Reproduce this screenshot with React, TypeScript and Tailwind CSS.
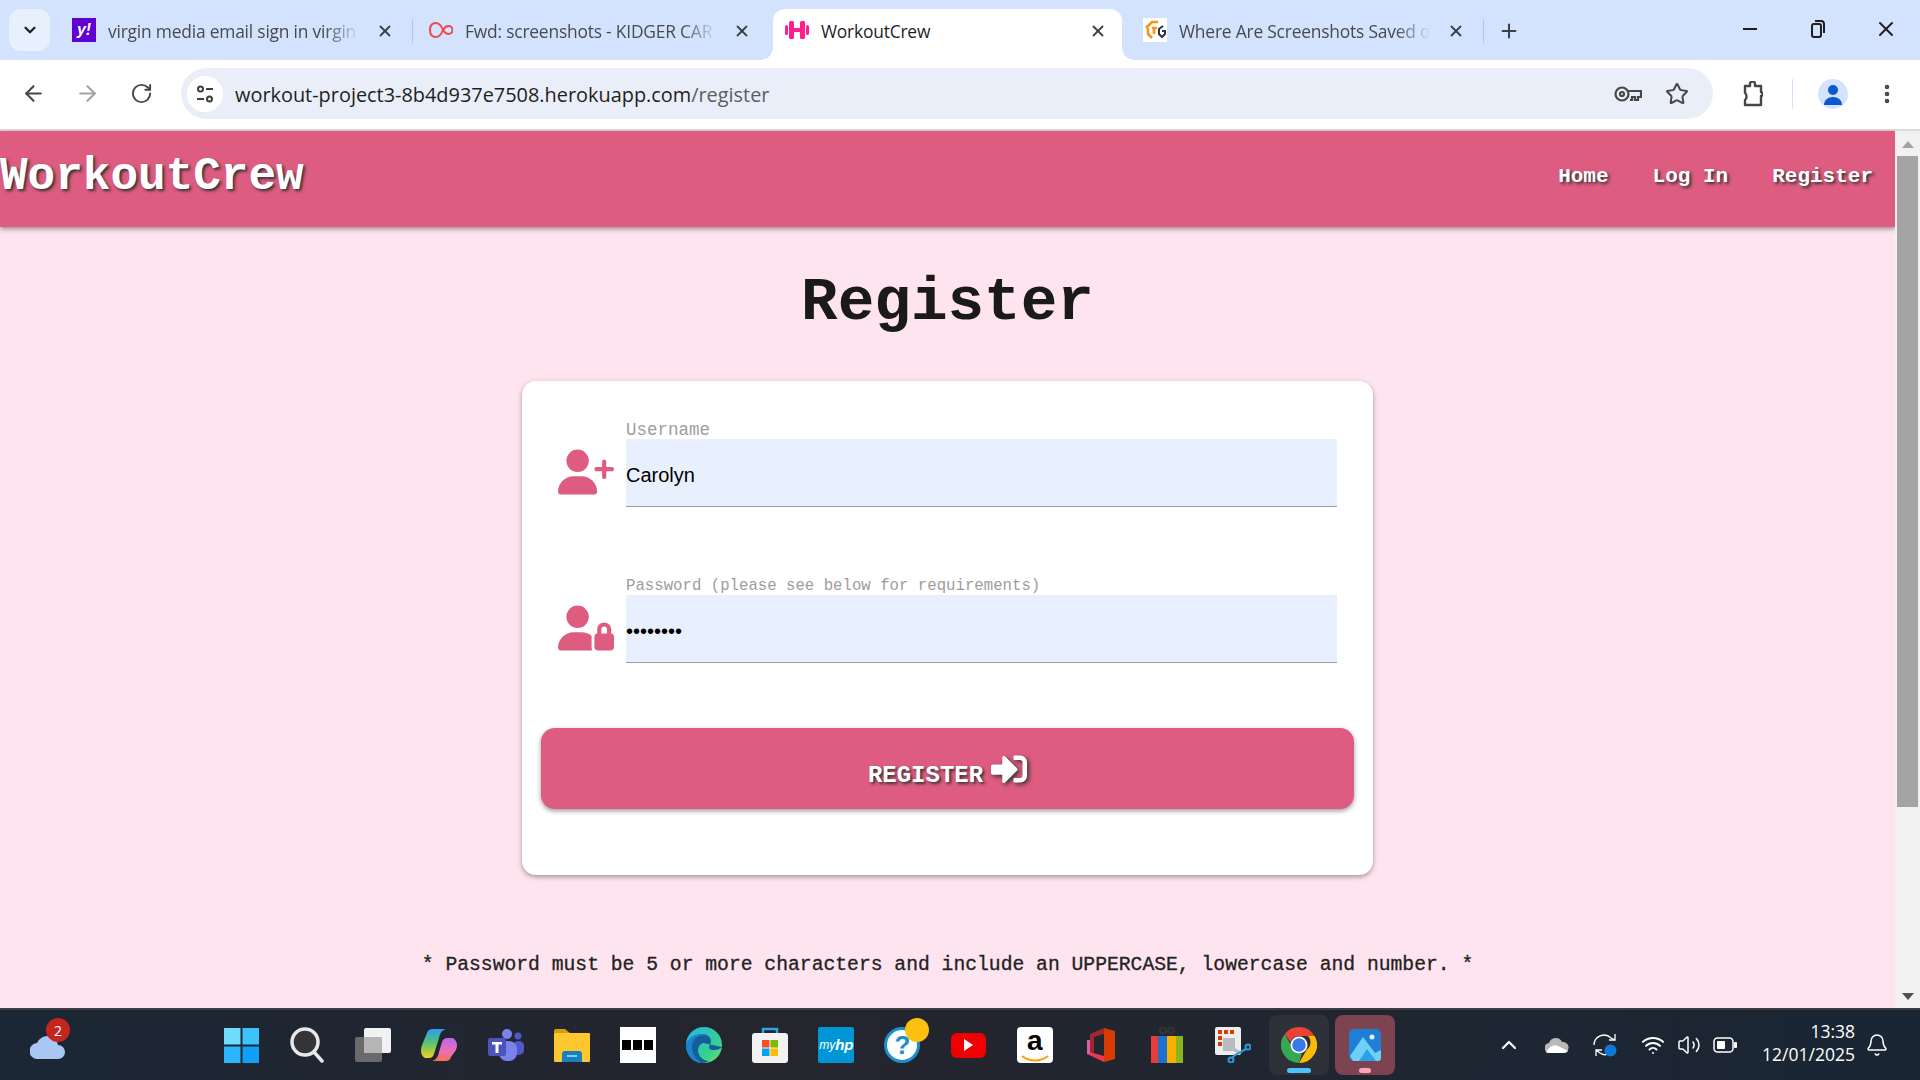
import {
  ArrowLeft,
  ArrowRight,
  Bell,
  ChevronDown,
  ChevronUp,
  EllipsisVertical,
  Plus,
  RotateCw,
  Star,
  Volume2,
  Wifi,
  X,
} from "lucide-react";
import { FaSignInAlt } from "react-icons/fa";
import { FaUserLock, FaUserPlus } from "react-icons/fa6";
import type { ReactNode } from "react";

const typewriter = "font-['Liberation_Mono',monospace] font-bold";
const chromeFont = "font-['Open_Sans',sans-serif]";

const Tab = ({
  icon,
  title,
  active,
  width,
}: {
  icon: ReactNode;
  title: string;
  active?: boolean;
  width: string;
}) => (
  <div
    className={`relative flex h-[51px] shrink-0 items-center pb-[7px] pl-3 ${width} ${
      active ? "rounded-t-[12px] bg-white" : ""
    }`}
  >
    <div className="mb-[2px] flex h-6 w-6 shrink-0 items-center justify-center overflow-hidden">{icon}</div>
    <span
      className={`ml-3 w-[252px] overflow-hidden whitespace-nowrap text-[17.400px] tracking-[-0.2px] ${chromeFont} ${
        active
          ? "text-[#1f1f1f]"
          : "text-[#474b50] [mask-image:linear-gradient(to_right,black_86%,transparent)]"
      }`}
    >
      {title}
    </span>
    <X className="ml-4 shrink-0 text-[#3c4043]" size={18} strokeWidth={2.4} />
    {active && (
      <>
        <div className="absolute -left-3 bottom-0 h-3 w-3 bg-[radial-gradient(circle_at_0_0,#d3e3fd_11.5px,white_12px)]" />
        <div className="absolute -right-3 bottom-0 h-3 w-3 bg-[radial-gradient(circle_at_100%_0,#d3e3fd_11.5px,white_12px)]" />
      </>
    )}
  </div>
);

const TabBar = () => (
  <div className="flex h-[60px] items-end bg-[#d3e3fd] pl-[9px]">
    <div className="mb-[9px] flex h-[42px] w-[41px] items-center justify-center rounded-xl bg-[#e9f0fd]">
      <ChevronDown className="text-[#1f1f1f]" size={18} strokeWidth={3} />
    </div>
    <div className="ml-[10px]">
      <Tab
        width="w-[352px]"
        title="virgin media email sign in virgin"
        icon={
          <div className="flex h-6 w-6 items-center justify-center bg-[#6001d2] font-['Liberation_Sans',sans-serif] text-[16px] font-bold italic text-white">
            y!
          </div>
        }
      />
    </div>
    <div className="mb-[17px] h-6 w-px shrink-0 bg-[#a8c7fa]" />
    <div className="ml-1">
      <Tab
        width="w-[352px]"
        title="Fwd: screenshots - KIDGER CAR"
        icon={
          <svg width="24" height="16" viewBox="0 0 24 16" fill="none" stroke="#ee4b4b" strokeWidth="2">
            <path d="M14 8C12 3 10 1 7 1 3 1 1 4 1 8s2 7 6 7c3 0 5-2 7-7Z" />
            <path d="M14 8c1.500-2.500 3-4 5.500-4a4 4 0 0 1 0 8c-2.500 0-4-1.500-5.500-4Z" />
          </svg>
        }
      />
    </div>
    <div className="ml-1">
      <Tab
        active
        width="w-[349px]"
        title="WorkoutCrew"
        icon={
          <svg width="24" height="24" viewBox="0 0 24 24" fill="#ff1f8f">
            <rect x="0" y="7" width="3" height="10" rx="1.500" />
            <rect x="4" y="3" width="5" height="18" rx="1.500" />
            <rect x="15" y="3" width="5" height="18" rx="1.500" />
            <rect x="21" y="7" width="3" height="10" rx="1.500" />
            <rect x="8" y="10" width="8" height="4" />
          </svg>
        }
      />
    </div>
    <div className="ml-[9px]">
      <Tab
        width="w-[352px]"
        title="Where Are Screenshots Saved o"
        icon={
          <svg width="24" height="24" viewBox="0 0 24 24" fill="none">
            <rect width="24" height="24" fill="#fff" />
            <path d="M3 10 9 4h6M5 10v6l4 4M9 10h5M11 10v6" stroke="#f7931e" strokeWidth="2.600" />
            <path d="M20 8l-4 3v5l3 3 3-3v-3h-3" stroke="#2b3440" strokeWidth="2" />
          </svg>
        }
      />
    </div>
    <div className="mb-[17px] h-6 w-px shrink-0 bg-[#a8c7fa]" />
    <div className="mb-[17px] ml-[13px] flex h-6 w-6 items-center justify-center">
      <Plus className="text-[#3c4043]" size={22} strokeWidth={2.2} />
    </div>
    <div className="ml-auto flex h-full items-center text-[#1f1f1f]">
      <div className="flex h-full w-[68px] items-center justify-center pb-[2px]">
        <div className="h-[2px] w-[14px] bg-[#1f1f1f]" />
      </div>
      <div className="flex h-full w-[68px] items-center justify-center pb-[2px]">
        <svg width="16" height="20" viewBox="0 0 16 20" fill="none" stroke="#1f1f1f" strokeWidth="2">
          <rect x="2" y="5" width="9" height="13" rx="2" />
          <path d="M5 2h6a3 3 0 0 1 3 3v9" />
        </svg>
      </div>
      <div className="flex h-full w-[68px] items-center justify-center pb-[2px]">
        <X size={24} strokeWidth={2} />
      </div>
    </div>
  </div>
);

const ToolBar = () => (
  <div className="flex h-[71px] items-center border-b-2 border-[#dadce0] bg-white pb-[2px]">
    <div className="ml-[6px] flex w-[54px] justify-center">
      <ArrowLeft className="text-[#474747]" size={25} strokeWidth={2} />
    </div>
    <div className="flex w-[54px] justify-center">
      <ArrowRight className="text-[#a3a3a3]" size={25} strokeWidth={2} />
    </div>
    <div className="flex w-[54px] justify-center">
      <RotateCw className="text-[#474747]" size={23} strokeWidth={2} />
    </div>
    <div className="ml-[13px] flex h-[51px] w-[1532px] items-center rounded-full bg-[#e9eef8] pr-6">
      <div className="ml-[6px] flex h-9 w-9 items-center justify-center rounded-full bg-white">
        <svg width="20" height="20" viewBox="0 0 20 20" fill="none" stroke="#3c4043" strokeWidth="2">
          <circle cx="5.500" cy="5" r="2.500" />
          <path d="M11 5h7M2 15h7" />
          <circle cx="14.500" cy="15" r="2.500" />
        </svg>
      </div>
      <span className={`ml-3 whitespace-nowrap pt-[2px] text-[19.900px] text-[#1f1f1f] ${chromeFont}`}>
        workout-project3-8b4d937e7508.herokuapp.com<span className="text-[#5a5e63]">/register</span>
      </span>
      <div className="ml-auto flex items-center gap-[23px]">
        <svg width="28" height="18" viewBox="0 0 28 18" fill="none" stroke="#474747" strokeWidth="2.200">
          <circle cx="8" cy="9" r="6.500" />
          <circle cx="8" cy="9" r="2" />
          <path d="M14 6h13v6h-3v3h-3v-3h-3v3h-2" />
        </svg>
        <Star className="text-[#474747]" size={24} strokeWidth={2} />
      </div>
    </div>
    <svg className="ml-[30px]" width="20" height="26" viewBox="0 0 20 26" fill="none" stroke="#474747" strokeWidth="2.400">
      <path d="M2 5h5V3a2 2 0 0 1 5 0v2h6v6c2 0 2 4 0 4v9H2v-5c2-1 2-6 0-7Z" strokeLinejoin="round" />
    </svg>
    <div className="ml-[29px] h-[30px] w-px bg-[#d3e3fd]" />
    <div className="ml-[25px] flex h-[30px] w-[30px] items-center justify-center overflow-hidden rounded-full bg-[#d3e3fd]">
      <svg width="22" height="24" viewBox="0 0 22 24" fill="#0b57d0">
        <circle cx="11" cy="8" r="5" />
        <path d="M2 23c0-5 4-8 9-8s9 3 9 8Z" />
      </svg>
    </div>
    <EllipsisVertical className="ml-[27px] text-[#474747]" size={24} strokeWidth={2.600} />
  </div>
);

const Field = ({
  label,
  labelSize,
  icon,
  type,
  value,
}: {
  label: string;
  labelSize: string;
  icon: ReactNode;
  type: string;
  value: string;
}) => (
  <div className="flex items-end">
    <div className="mb-[7px] flex w-[68px] shrink-0 text-[56px] text-[#dd5c80]">{icon}</div>
    <div className="flex-1">
      <label className={`block leading-[17px] text-[#a09c9c] font-['Liberation_Mono',monospace] ${labelSize}`}>
        {label}
      </label>
      <input
        readOnly
        type={type}
        value={value}
        className="block h-[68px] w-full border-b-[1.500px] border-[#9e9e9e] bg-[#e8f0fe] pt-[5px] font-['Liberation_Sans',sans-serif] text-[20px] text-black outline-none"
      />
    </div>
  </div>
);

const Page = () => (
  <div className="min-w-0 flex-1 bg-[#fee4ee]">
    <nav className="flex h-[96px] items-center justify-between bg-[#dd5c80] pr-[22px] shadow-[0_2px_5px_rgba(0,0,0,0.4)]">
      <a className={`pb-[4px] text-[46px] leading-none text-white [text-shadow:2px_2px_3px_#333] ${typewriter}`}>
        WorkoutCrew
      </a>
      <div className={`flex gap-11 pb-1 text-[21px] text-white [text-shadow:2px_2px_3px_#333] ${typewriter}`}>
        <span>Home</span>
        <span>Log In</span>
        <span>Register</span>
      </div>
    </nav>
    <h1 className={`mt-[42px] text-center text-[61px] leading-[68px] text-[#1a1a1a] ${typewriter}`}>Register</h1>
    <form className="mx-auto mt-[44px] h-[494px] w-[851px] rounded-[14px] bg-white px-[36px] pt-[41px] shadow-[0_2px_5px_rgba(0,0,0,0.35)]">
      <Field label="Username" labelSize="text-[17.500px]" type="text" value="Carolyn" icon={<FaUserPlus />} />
      <div className="mt-[71px]">
        <Field
          label="Password (please see below for requirements)"
          labelSize="text-[15.700px]"
          type="password"
          value="Password"
          icon={<FaUserLock />}
        />
      </div>
      <button
        type="button"
        className={`-mx-[17px] mt-[65px] flex h-[81px] w-[813px] items-center justify-center gap-2 rounded-[14px] bg-[#dd5c80] text-[24px] text-white shadow-[0_2px_5px_rgba(0,0,0,0.4)] [text-shadow:2px_2px_3px_#333] ${typewriter}`}
      >
        <span className="mt-[14px]">REGISTER</span>
        <FaSignInAlt className="text-[36px] [filter:drop-shadow(2px_2px_2px_#333)]" />
      </button>
    </form>
    <p className="mt-[76px] text-center text-[19.700px] text-[#222] [-webkit-text-stroke:0.3px_#222] font-['Liberation_Mono',monospace]">
      * Password must be 5 or more characters and include an UPPERCASE, lowercase and number. *
    </p>
  </div>
);

const ScrollBar = () => (
  <div className="flex w-[25px] shrink-0 flex-col items-center bg-[#f1f1f1]">
    <div className="mt-[10px] h-0 w-0 border-x-[6px] border-b-[7px] border-x-transparent border-b-[#a3a3a3]" />
    <div className="mt-[8px] h-[651px] w-[21px] bg-[#a3a3a3]" />
    <div className="mt-auto mb-[8px] h-0 w-0 border-x-[6px] border-t-[7px] border-x-transparent border-t-[#505050]" />
  </div>
);

const Cell = ({ children }: { children: ReactNode }) => (
  <div className="flex h-full w-[66.150px] shrink-0 items-center justify-center">{children}</div>
);

const Taskbar = () => (
  <div className="flex h-[72px] items-center border-t-2 border-[#3b3d42] bg-[linear-gradient(90deg,#1b2735,#25252d_40%,#1f2632_70%,#1a2634)]">
    {/* weather */}
    <div className="relative flex h-full w-[208px] shrink-0 items-center pl-[30px] pt-1">
      <svg width="36" height="24" viewBox="0 0 36 24">
        <path d="M8 24a8 8 0 0 1-1-16 11 11 0 0 1 21 2 7 7 0 0 1 0 14Z" fill="#a9c6f5" />
      </svg>
      <div className="absolute left-[46px] top-[8px] flex h-6 w-6 items-center justify-center rounded-full bg-[#c4261d] font-['Open_Sans',sans-serif] text-[14px] text-white">
        2
      </div>
    </div>

    <Cell>
      <svg width="35" height="35" viewBox="0 0 35 35">
        <rect width="16.500" height="16.500" x="0" y="0" fill="#6fdcfb" />
        <rect width="16.500" height="16.500" x="18.500" y="0" fill="#3cc3fb" />
        <rect width="16.500" height="16.500" x="0" y="18.500" fill="#2cb5fa" />
        <rect width="16.500" height="16.500" x="18.500" y="18.500" fill="#10a0f7" />
      </svg>
    </Cell>
    <Cell>
      <svg width="34" height="36" viewBox="0 0 34 36" fill="none" stroke="#e8e8e8" strokeWidth="3.500" strokeLinecap="round">
        <circle cx="15" cy="15" r="13" fill="#33343a" />
        <path d="M24 25l8 9" />
      </svg>
    </Cell>
    <Cell>
      <svg width="36" height="34" viewBox="0 0 36 34">
        <rect x="0" y="9" width="27" height="25" rx="2" fill="#6a6a6a" />
        <rect x="9" y="0" width="27" height="25" rx="2" fill="#f2f2f2" />
        <rect x="9" y="9" width="18" height="16" fill="#b5b5b5" />
      </svg>
    </Cell>
    <Cell>
      <svg width="36" height="34" viewBox="0 0 36 34">
        <defs>
          <linearGradient id="cpa" x1="0" y1="0" x2="0" y2="1">
            <stop offset="0" stopColor="#2a9df4" />
            <stop offset="0.5" stopColor="#5cc46a" />
            <stop offset="1" stopColor="#f5d020" />
          </linearGradient>
          <linearGradient id="cpb" x1="0" y1="0" x2="0" y2="1">
            <stop offset="0" stopColor="#b66be6" />
            <stop offset="0.6" stopColor="#ee6cb8" />
            <stop offset="1" stopColor="#f5754a" />
          </linearGradient>
        </defs>
        <path d="M11 1h14c-4 1-6 4-7 9l-5 16c-1 3-3 4-5 4H4C0 28-1 23 1 17L6 5c1-3 3-4 5-4Z" fill="url(#cpa)" />
        <path d="M25 33H11c4-1 6-4 7-9l3-10c1-3 3-4 5-4h6c4 3 5 7 3 12l-5 7c-1 3-3 4-5 4Z" fill="url(#cpb)" />
      </svg>
    </Cell>
    <Cell>
      <svg width="36" height="32" viewBox="0 0 36 32">
        <circle cx="19" cy="5" r="5" fill="#7b83eb" />
        <circle cx="30" cy="7" r="3.500" fill="#5059c9" />
        <rect x="25" y="12" width="11" height="14" rx="5" fill="#5059c9" />
        <rect x="11" y="12" width="18" height="20" rx="8" fill="#7b83eb" />
        <rect x="0" y="9" width="18" height="18" rx="2" fill="#4b53bc" />
        <path d="M4 13h10v2.500h-3.500V24h-3v-8.500H4Z" fill="#fff" />
      </svg>
    </Cell>
    <Cell>
      <svg width="36" height="33" viewBox="0 0 36 33">
        <path d="M0 2a2 2 0 0 1 2-2h9l5 4H0Z" fill="#d59c0b" />
        <rect x="0" y="4" width="36" height="29" rx="1" fill="#fec72f" />
        <path d="M8 33V25a3 3 0 0 1 3-3h14a3 3 0 0 1 3 3v8Z" fill="#1a7fbf" />
        <rect x="13" y="26" width="10" height="2" fill="#7fd0f5" />
      </svg>
    </Cell>
    <Cell>
      <div className="flex h-9 w-9 items-center justify-center gap-[2px] bg-white">
        <div className="h-[10px] w-[9px] bg-black" />
        <div className="h-[10px] w-[9px] bg-black" />
        <div className="h-[10px] w-[9px] bg-black" />
      </div>
    </Cell>
    <Cell>
      <svg width="36" height="36" viewBox="0 0 36 36">
        <defs>
          <linearGradient id="edg" x1="0" y1="0" x2="1" y2="1">
            <stop offset="0" stopColor="#1fb6e8" />
            <stop offset="0.7" stopColor="#39d28c" />
            <stop offset="1" stopColor="#7fe36a" />
          </linearGradient>
        </defs>
        <circle cx="18" cy="18" r="18" fill="url(#edg)" />
        <path d="M36 20c-1 2-5 3-9 3-3 0-4-1-4-3s2-3 2-6c0-4-4-7-9-7C8 7 2 12 0 18c0 10 7 18 16 18 3 0 5-1 7-2-6 0-11-5-11-11 0-3 2-6 5-7" fill="#125f9a" />
        <path d="M0 18c1-6 8-11 16-11 2 0 4 .5 5 1.500C12 7 6 12 6 20c0 7 4 13 10 16C7 36 0 28 0 18Z" fill="#1c84cf" />
      </svg>
    </Cell>
    <Cell>
      <svg width="36" height="36" viewBox="0 0 36 36">
        <path d="M11 7V2h14v5" fill="none" stroke="#2aa5e8" strokeWidth="2.500" />
        <rect x="0" y="6" width="36" height="30" rx="3" fill="#f2f2f2" />
        <rect x="10" y="13" width="7.500" height="7.500" fill="#f25022" />
        <rect x="18.500" y="13" width="7.500" height="7.500" fill="#7fba00" />
        <rect x="10" y="21.500" width="7.500" height="7.500" fill="#00a4ef" />
        <rect x="18.500" y="21.500" width="7.500" height="7.500" fill="#ffb900" />
      </svg>
    </Cell>
    <Cell>
      <div className="flex h-9 w-9 items-center justify-center rounded-[2px] bg-[#0096d6] font-['Liberation_Sans',sans-serif] text-[12px] italic text-white">
        my<span className="text-[15px] font-bold">hp</span>
      </div>
    </Cell>
    <Cell>
      <div className="relative flex h-9 w-9 items-center justify-center rounded-full border-[3px] border-[#1b8fd0] bg-white font-['Liberation_Sans',sans-serif] text-[26px] font-bold leading-none text-[#1b8fd0]">
        ?<div className="absolute -right-[12px] -top-[12px] h-6 w-6 rounded-full bg-[#fdc00f]" />
      </div>
    </Cell>
    <Cell>
      <div className="flex h-[25px] w-[35px] items-center justify-center rounded-[6px] bg-[#f00000]">
        <div className="h-0 w-0 border-y-[6px] border-l-[9px] border-y-transparent border-l-white" />
      </div>
    </Cell>
    <Cell>
      <div className="flex h-9 w-9 flex-col items-center rounded-[4px] bg-white font-['Liberation_Sans',sans-serif] text-[28px] font-bold leading-[28px] text-black">
        a
        <svg width="28" height="7" viewBox="0 0 28 7" fill="none" stroke="#f90" strokeWidth="2">
          <path d="M1 1c8 6 18 6 26 0" />
        </svg>
      </div>
    </Cell>
    <Cell>
      <svg width="28" height="34" viewBox="0 0 28 34">
        <path d="M17 0 28 3v28l-11 3Z" fill="#d83b01" />
        <path d="M17 0 3 6v20l4-2V9l10-3Z" fill="#a4262c" />
        <path d="M0 26l17 8v-6L3 24Z" fill="#e8384f" />
        <path d="M0 12h3v14H0Z" fill="#d660a8" />
      </svg>
    </Cell>
    <Cell>
      <svg width="32" height="36" viewBox="0 0 32 36">
        <circle cx="12" cy="3.500" r="3" fill="none" stroke="#333" strokeWidth="2.500" />
        <circle cx="20" cy="3.500" r="3" fill="none" stroke="#333" strokeWidth="2.500" />
        <rect x="0" y="9" width="7" height="27" fill="#ea3a3a" />
        <rect x="7" y="9" width="9" height="27" fill="#1f6fd0" />
        <rect x="16" y="9" width="9" height="27" fill="#f5b000" />
        <rect x="25" y="9" width="7" height="27" fill="#8ab51d" />
      </svg>
    </Cell>
    <Cell>
      <svg width="36" height="36" viewBox="0 0 36 36">
        <rect x="0" y="0" width="26" height="28" rx="2" fill="#eee" />
        <path d="M3 3h4v4H3ZM9 3h4v4H9ZM15 3h4v4h-4ZM3 9h4v4H3ZM3 15h4v4H3Z" fill="#d83b01" />
        <path d="M8 11h12v10l5 3v3l-7-3H8Z" fill="#b8bcc2" />
        <circle cx="33" cy="20" r="2.500" fill="none" stroke="#2a9bd8" strokeWidth="2" />
        <circle cx="16" cy="33" r="2.500" fill="none" stroke="#2a9bd8" strokeWidth="2" />
        <path d="M31 22 20 28l-3 3" fill="none" stroke="#2a9bd8" strokeWidth="2" />
      </svg>
    </Cell>
    <Cell>
      <div className="relative flex h-[60px] w-[60px] items-center justify-center rounded-lg bg-[#2e3138]">
        <svg width="36" height="36" viewBox="0 0 36 36">
          <path d="M18 0a18 18 0 0 1 15.600 9H18a9 9 0 0 0-8.500 6L3.600 7.200A18 18 0 0 1 18 0Z" fill="#ea4335" />
          <path d="M33.600 9A18 18 0 0 1 18 36l7.800-13.500A9 9 0 0 0 27 9Z" fill="#fbbc05" />
          <path d="M18 36A18 18 0 0 1 3.600 7.200L11 20a9 9 0 0 0 10 6.500Z" fill="#34a853" />
          <circle cx="18" cy="18" r="8.500" fill="#fff" />
          <circle cx="18" cy="18" r="6.800" fill="#3b78e7" />
        </svg>
        <div className="absolute bottom-[2px] left-[18px] h-[5px] w-6 rounded-full bg-[#4cc2ff]" />
      </div>
    </Cell>
    <Cell>
      <div className="relative flex h-[60px] w-[60px] items-center justify-center rounded-lg bg-[#7d4450]">
        <svg width="32" height="32" viewBox="0 0 32 32">
          <rect width="32" height="32" rx="5" fill="#1f7fd6" />
          <circle cx="23" cy="8" r="2.500" fill="#dfeffc" />
          <path d="M1 27 14 8l12 16 6-3v8a3 3 0 0 1-3 3H4Z" fill="#6fd0f7" />
          <path d="M10 32 18 20l9 12Z" fill="#2aa1e8" />
        </svg>
        <div className="absolute bottom-[2px] left-[24px] h-[5px] w-3 rounded-full bg-[#f9a8b8]" />
      </div>
    </Cell>

    {/* tray */}
    <div className="ml-auto flex h-full items-center text-white">
      <div className="flex w-12 justify-center">
        <ChevronUp size={24} strokeWidth={2.200} />
      </div>
      <div className="flex w-12 justify-center">
        <svg width="24" height="16" viewBox="0 0 24 16">
          <path d="M5 16a5 5 0 0 1-1-10 7 7 0 0 1 13-1 5.500 5.500 0 0 1 2 11Z" fill="#b8b8b8" />
          <path d="M1 15c3-5 8-8 12-6l10 5c-1 1-2 2-4 2H5c-2 0-3 0-4-1Z" fill="#fff" />
        </svg>
      </div>
      <div className="flex w-12 justify-center">
        <svg width="24" height="24" viewBox="0 0 24 24" fill="none" stroke="#fff" strokeWidth="1.300">
          <path d="M1 12a10 10 0 0 1 17-7l4 2" />
          <path d="M22 1v6h-6" />
          <path d="M3 23v-6h6M3 17l4 3c3 2 6 2 7 1" />
          <circle cx="17.500" cy="17.500" r="6" fill="#0f78d4" stroke="none" />
        </svg>
      </div>
      <Wifi className="ml-3" size={24} strokeWidth={2} />
      <Volume2 className="ml-3" size={24} strokeWidth={1.500} />
      <svg className="ml-3" width="24" height="16" viewBox="0 0 24 16">
        <rect x="1" y="1" width="19" height="14" rx="3.500" fill="none" stroke="#fff" strokeWidth="1.500" />
        <rect x="4" y="4" width="8" height="8" rx="1" fill="#fff" />
        <rect x="21" y="5" width="3" height="6" rx="1" fill="#fff" />
      </svg>
      <div className={`w-[118px] pb-1 text-right text-[17.500px] leading-[23px] ${chromeFont}`}>
        <div>13:38</div>
        <div>12/01/2025</div>
      </div>
      <Bell className="ml-[10px] mr-[31px]" size={24} strokeWidth={1.500} />
    </div>
  </div>
);

const App = () => {
  return (
    <div className="flex h-[1080px] w-[1920px] flex-col overflow-hidden bg-white">
      <TabBar />
      <ToolBar />
      <div className="flex min-h-0 flex-1">
        <Page />
        <ScrollBar />
      </div>
      <Taskbar />
    </div>
  );
};

export default App;
